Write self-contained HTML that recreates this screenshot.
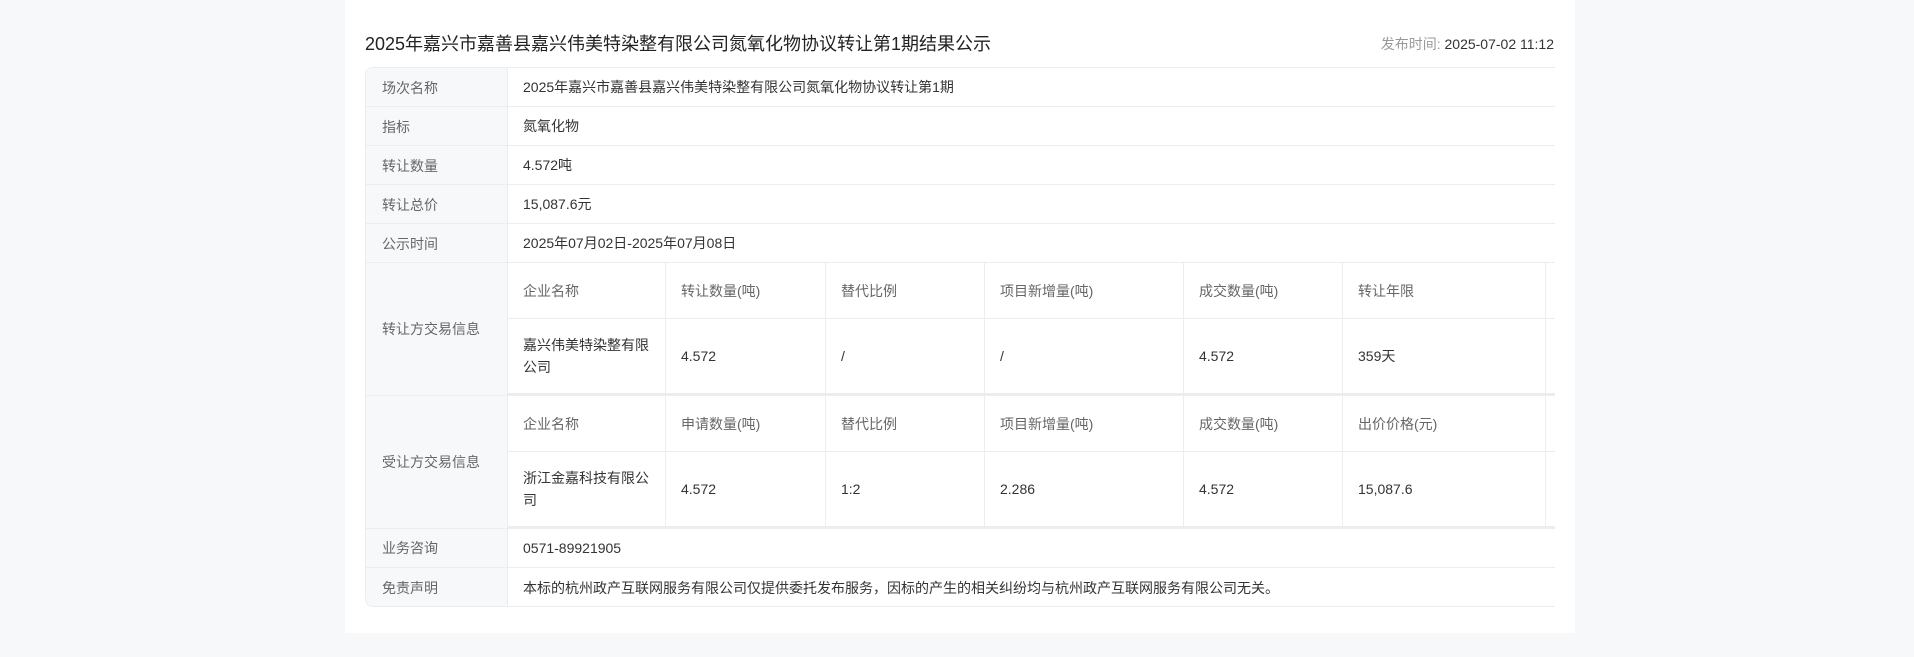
<!DOCTYPE html>
<html><head><meta charset="utf-8"><style>
*{margin:0;padding:0;box-sizing:border-box}
body{width:1914px;height:657px;background:#f7f8fa;font-family:"Liberation Sans","Noto Sans CJK SC",sans-serif;position:relative;overflow:hidden;color:#333}
.card{position:absolute;left:345px;top:0;width:1230px;height:633px;background:#fff}
.a{position:absolute;white-space:nowrap}
.title{left:365px;top:31px;font-size:18px;color:#222;line-height:26px}
.time{right:360px;top:34px;font-size:14px;line-height:20px}
.tbl{position:absolute;left:365px;top:67px;width:1190px;height:540px;border:1px solid #ebedf0;border-right:none;border-radius:8px 0 0 8px;overflow:hidden}
.lab{position:absolute;left:0;width:142px;background:#f7f8fa;border-right:1px solid #ebedf0;font-size:14px;color:#666;padding-left:16px;display:flex;align-items:center}
.val{position:absolute;left:142px;right:0;font-size:14px;color:#333;padding-left:15px;display:flex;align-items:center;border-bottom:1px solid #ebedf0}
.hl{position:absolute;left:0;right:0;height:1px;background:#ebedf0}
.c{position:absolute;font-size:14px;display:flex;align-items:center;padding-left:15px;border-right:1px solid #ebedf0;border-bottom:1px solid #ebedf0;line-height:22px}
.h{color:#666}
</style></head><body>
<div class="card"></div>
<div class="a title">2025年嘉兴市嘉善县嘉兴伟美特染整有限公司氮氧化物协议转让第1期结果公示</div>
<div class="a time"><span style="color:#999">发布时间:</span> 2025-07-02 11:12</div>
<div class="tbl">
<div class="lab" style="top:0;height:39px">场次名称</div><div class="val" style="top:0;height:39px">2025年嘉兴市嘉善县嘉兴伟美特染整有限公司氮氧化物协议转让第1期</div>
<div class="lab" style="top:39px;height:39px">指标</div><div class="val" style="top:39px;height:39px">氮氧化物</div>
<div class="lab" style="top:78px;height:39px">转让数量</div><div class="val" style="top:78px;height:39px">4.572吨</div>
<div class="lab" style="top:117px;height:39px">转让总价</div><div class="val" style="top:117px;height:39px">15,087.6元</div>
<div class="lab" style="top:156px;height:39px">公示时间</div><div class="val" style="top:156px;height:39px">2025年07月02日-2025年07月08日</div>
<div class="hl" style="top:38px"></div><div class="hl" style="top:77px"></div><div class="hl" style="top:116px"></div><div class="hl" style="top:155px"></div><div class="hl" style="top:194px"></div>
<div class="lab" style="top:195px;height:133px;border-bottom:1px solid #ebedf0">转让方交易信息</div>
<div class="lab" style="top:328px;height:133px;border-bottom:1px solid #ebedf0">受让方交易信息</div>
<div class="lab" style="top:461px;height:39px;border-bottom:1px solid #ebedf0">业务咨询</div><div class="val" style="top:461px;height:39px">0571-89921905</div>
<div class="lab" style="top:500px;height:39px">免责声明</div><div class="val" style="top:500px;height:39px;border-bottom:none">本标的杭州政产互联网服务有限公司仅提供委托发布服务，因标的产生的相关纠纷均与杭州政产互联网服务有限公司无关。</div>

<div class="c h" style="left:142px;top:195px;width:158px;height:56px">企业名称</div>
<div class="c h" style="left:300px;top:195px;width:160px;height:56px">转让数量(吨)</div>
<div class="c h" style="left:460px;top:195px;width:159px;height:56px">替代比例</div>
<div class="c h" style="left:619px;top:195px;width:199px;height:56px">项目新增量(吨)</div>
<div class="c h" style="left:818px;top:195px;width:159px;height:56px">成交数量(吨)</div>
<div class="c h" style="left:977px;top:195px;width:203px;height:56px">转让年限</div>
<div class="c" style="left:1180px;top:195px;width:40px;height:56px"></div>
<div class="c" style="left:142px;top:251px;width:158px;height:77px;border-bottom:3px solid #ebedf0">嘉兴伟美特染整有限<br>公司</div>
<div class="c" style="left:300px;top:251px;width:160px;height:77px;border-bottom:3px solid #ebedf0">4.572</div>
<div class="c" style="left:460px;top:251px;width:159px;height:77px;border-bottom:3px solid #ebedf0">/</div>
<div class="c" style="left:619px;top:251px;width:199px;height:77px;border-bottom:3px solid #ebedf0">/</div>
<div class="c" style="left:818px;top:251px;width:159px;height:77px;border-bottom:3px solid #ebedf0">4.572</div>
<div class="c" style="left:977px;top:251px;width:203px;height:77px;border-bottom:3px solid #ebedf0">359天</div>
<div class="c" style="left:1180px;top:251px;width:40px;height:77px;border-bottom:3px solid #ebedf0"></div>

<div class="c h" style="left:142px;top:328px;width:158px;height:56px">企业名称</div>
<div class="c h" style="left:300px;top:328px;width:160px;height:56px">申请数量(吨)</div>
<div class="c h" style="left:460px;top:328px;width:159px;height:56px">替代比例</div>
<div class="c h" style="left:619px;top:328px;width:199px;height:56px">项目新增量(吨)</div>
<div class="c h" style="left:818px;top:328px;width:159px;height:56px">成交数量(吨)</div>
<div class="c h" style="left:977px;top:328px;width:203px;height:56px">出价价格(元)</div>
<div class="c" style="left:1180px;top:328px;width:40px;height:56px"></div>
<div class="c" style="left:142px;top:384px;width:158px;height:77px;border-bottom:3px solid #ebedf0">浙江金嘉科技有限公<br>司</div>
<div class="c" style="left:300px;top:384px;width:160px;height:77px;border-bottom:3px solid #ebedf0">4.572</div>
<div class="c" style="left:460px;top:384px;width:159px;height:77px;border-bottom:3px solid #ebedf0">1:2</div>
<div class="c" style="left:619px;top:384px;width:199px;height:77px;border-bottom:3px solid #ebedf0">2.286</div>
<div class="c" style="left:818px;top:384px;width:159px;height:77px;border-bottom:3px solid #ebedf0">4.572</div>
<div class="c" style="left:977px;top:384px;width:203px;height:77px;border-bottom:3px solid #ebedf0">15,087.6</div>
<div class="c" style="left:1180px;top:384px;width:40px;height:77px;border-bottom:3px solid #ebedf0"></div>
</div>
</body></html>
